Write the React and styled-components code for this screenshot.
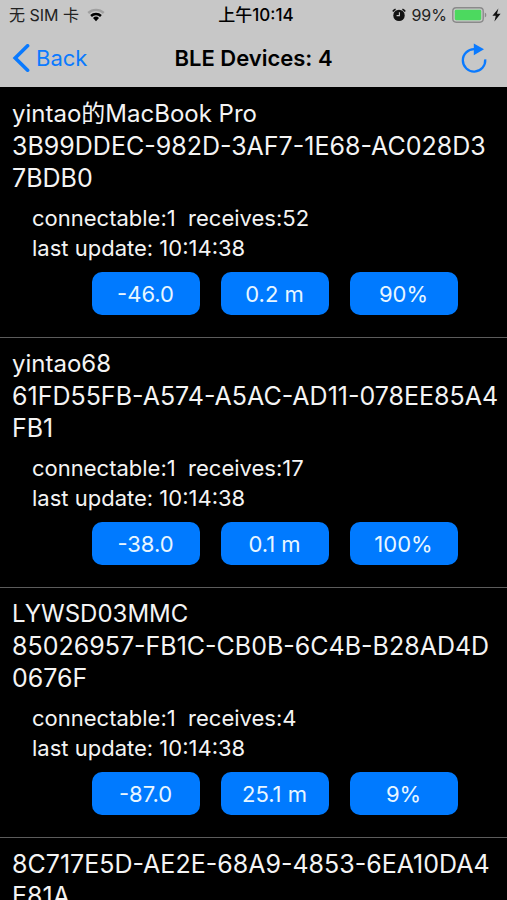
import React from 'react'
import styled, { createGlobalStyle } from 'styled-components'

const GlobalStyle = createGlobalStyle`
  html, body {
    margin: 0;
    background: #000;
  }
  body {
    font-family: Inter, "Noto Sans CJK SC", sans-serif;
    overflow-x: hidden;
  }
  body::-webkit-scrollbar {
    display: none;
  }
  button {
    font-family: inherit;
    border: 0;
    padding: 0;
    cursor: pointer;
  }
`

const Header = styled.header`
  position: sticky;
  top: 0;
  background: #c7c7c7;
  color: #000;
  border-bottom: 1px solid #000;
`

const StatusBar = styled.div`
  display: grid;
  grid-template-columns: 1fr auto 1fr;
  align-items: center;
  height: 30px;
  padding: 0 6px;
  font-size: 16px;
  line-height: 30px;
`

const StatusGroup = styled.div`
  display: flex;
  align-items: center;
  justify-content: ${props => props.$end ? 'flex-end' : 'flex-start'};
  gap: ${props => props.$end ? '5px' : '8px'};
  padding-left: 3px;
  color: #222;
`

const Clock = styled.time`
  padding-left: 5px;
  font-size: 17px;
  font-weight: 500;
`

const NavBar = styled.nav`
  box-sizing: border-box;
  display: grid;
  grid-template-columns: 1fr auto 1fr;
  align-items: center;
  height: 57px;
  padding: 0 12px 2px;
`

const NavButton = styled.button`
  display: flex;
  align-items: center;
  gap: 6px;
  justify-self: ${props => props.$end ? 'end' : 'start'};
  margin-right: ${props => props.$end ? '8px' : '0'};
  background: none;
  color: #0a7aff;
  font-size: 22px;
  line-height: 32px;
`

const Title = styled.h1`
  margin: 0;
  font-size: 22px;
  font-weight: 600;
  line-height: 32px;
`

const List = styled.ul`
  list-style: none;
  margin: 0;
  padding: 0;
`

const Row = styled.li`
  box-sizing: border-box;
  padding: 10px 6px 22px 12px;
  border-bottom: 1px solid #5c5c5c;
  color: #f4f4f4;
`

const Name = styled.div`
  font-size: 24px;
  line-height: 32px;
`

const Uuid = styled.div`
  font-size: 25px;
  line-height: 32px;
  white-space: pre-line;
`

const Details = styled.div`
  padding: 9px 20px;
  font-size: 22px;
  line-height: 30px;
  white-space: pre-wrap;
`

const Values = styled.div`
  display: flex;
  justify-content: center;
  gap: 21px;
  padding-left: 36px;
`

const Value = styled.button`
  width: 108px;
  height: 43px;
  border-radius: 10px;
  background: #007aff;
  color: #e8f6ff;
  font-size: 22px;
`

const devices = [
  { name: 'yintao的MacBook Pro', id: '3B99DDEC-982D-3AF7-1E68-AC028D3\n7BDB0', receives: 52, rssi: '-46.0', distance: '0.2 m', signal: '90%' },
  { name: 'yintao68', id: '61FD55FB-A574-A5AC-AD11-078EE85A4\nFB1', receives: 17, rssi: '-38.0', distance: '0.1 m', signal: '100%' },
  { name: 'LYWSD03MMC', id: '85026957-FB1C-CB0B-6C4B-B28AD4D\n0676F', receives: 4, rssi: '-87.0', distance: '25.1 m', signal: '9%' },
  { id: '8C717E5D-AE2E-68A9-4853-6EA10DA4\nE81A' },
]

const Wifi = () => (
  <svg width="18" height="14" viewBox="0 0 18 14">
    <path d="M0.4 4.1a12.4 12.4 0 0 1 17.2 0l-1.7 1.8a9.8 9.8 0 0 0-13.8 0z" fill="#a0a0a0" />
    <path d="M3.2 7.1a8.2 8.2 0 0 1 11.6 0l-1.7 1.8a5.9 5.9 0 0 0-8.2 0z" fill="#000" />
    <path d="M6 10a4.3 4.3 0 0 1 6 0l-3 3.2z" fill="#000" />
  </svg>
)

const Alarm = () => (
  <svg width="14" height="14" viewBox="0 0 14 14">
    <circle cx="7" cy="7.4" r="5.7" fill="#111" />
    <path d="M0.8 3.4a8 8 0 0 1 2.8-2.2M13.2 3.4a8 8 0 0 0-2.8-2.2" stroke="#111" strokeWidth="1.6" fill="none" />
    <path d="M7.4 4.2v3.4H4.6" stroke="#c7c7c7" strokeWidth="1.1" fill="none" />
  </svg>
)

const Battery = () => (
  <svg width="35" height="16" viewBox="0 0 35 16">
    <rect x="0.8" y="0.8" width="30.4" height="14.4" rx="3.4" fill="#c7c7c7" stroke="#8a8a8a" strokeWidth="1.4" />
    <rect x="2.8" y="2.8" width="26.4" height="10.4" rx="1.4" fill="#4cd95f" />
    <path d="M32.8 5.6a2.6 2.6 0 0 1 0 4.8z" fill="#8a8a8a" />
  </svg>
)

const Bolt = () => (
  <svg width="9" height="14" viewBox="0 0 9 14">
    <path d="M6.4 0.6L0.4 7.8h3.4L2.4 13.4l6.2-7.6H5z" fill="#111" />
  </svg>
)

const Chevron = () => (
  <svg width="18" height="28" viewBox="0 0 18 28">
    <path d="M15.6 1.8L3.2 14l12.4 12.2" fill="none" stroke="#0a7aff" strokeWidth="3.6" strokeLinecap="round" />
  </svg>
)

const Refresh = () => (
  <svg width="26" height="30" viewBox="0 0 26 30">
    <path d="M13.4 6.2A11.2 11.2 0 1 0 24.2 16.4" fill="none" stroke="#0a7aff" strokeWidth="2.3" />
    <path d="M12.8 0.4L23 6.2l-10.2 6z" fill="#0a7aff" />
  </svg>
)

const Device = ({ device }) => (
  <Row>
    {device.name && <Name>{device.name}</Name>}
    <Uuid>{device.id}</Uuid>
    {device.rssi && (
      <>
        <Details>
          <div>{`connectable:1  receives:${device.receives}`}</div>
          <div>last update: 10:14:38</div>
        </Details>
        <Values>
          <Value>{device.rssi}</Value>
          <Value>{device.distance}</Value>
          <Value>{device.signal}</Value>
        </Values>
      </>
    )}
  </Row>
)

export default class App extends React.Component {
  render() {
    return (
      <>
        <GlobalStyle />
        <Header>
          <StatusBar>
            <StatusGroup>
              <span>无 SIM 卡</span>
              <Wifi />
            </StatusGroup>
            <Clock>上午10:14</Clock>
            <StatusGroup $end>
              <Alarm />
              <span>99%</span>
              <Battery />
              <Bolt />
            </StatusGroup>
          </StatusBar>
          <NavBar>
            <NavButton><Chevron />Back</NavButton>
            <Title>BLE Devices: 4</Title>
            <NavButton $end aria-label="Refresh"><Refresh /></NavButton>
          </NavBar>
        </Header>
        <List>
          {devices.map(device => <Device key={device.id} device={device} />)}
        </List>
      </>
    )
  }
}
